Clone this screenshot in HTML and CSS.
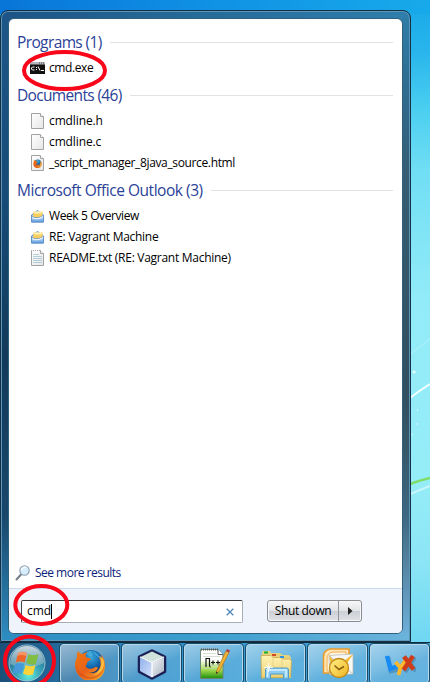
FILE: index.html
```html
<!DOCTYPE html>
<html lang="en">
<head>
<meta charset="utf-8">
<title>Start menu</title>
<link rel="stylesheet" href="styles.css">
</head>
<body>
<svg width="0" height="0" class="defs" aria-hidden="true">
  <defs>
    <linearGradient id="paper" x1="0" y1="0" x2="1" y2="1"><stop offset="0" stop-color="#fff"/><stop offset="1" stop-color="#e6e6e6"/></linearGradient>
    <radialGradient id="globe" cx=".5" cy=".3" r=".7"><stop offset="0" stop-color="#38a9dc"/><stop offset=".6" stop-color="#1160a8"/><stop offset="1" stop-color="#0a2a68"/></radialGradient>
    <linearGradient id="fox" x1="0" y1="0" x2="1" y2="1"><stop offset="0" stop-color="#f07a10"/><stop offset=".5" stop-color="#e8601a"/><stop offset="1" stop-color="#f9b52c"/></linearGradient>
    <linearGradient id="folder" x1="0" y1="0" x2="0" y2="1"><stop offset="0" stop-color="#fff3b4"/><stop offset="1" stop-color="#ecd071"/></linearGradient>
    <linearGradient id="green" x1="0" y1="0" x2="0" y2="1"><stop offset=".35" stop-color="#fff"/><stop offset=".7" stop-color="#a4dc50"/><stop offset="1" stop-color="#1d8e0c"/></linearGradient>
    <linearGradient id="mail" x1="0" y1="0" x2="0" y2="1"><stop offset="0" stop-color="#e4f1ff"/><stop offset="1" stop-color="#5a9be0"/></linearGradient>
    <radialGradient id="orb" cx=".55" cy=".85" r=".8"><stop offset="0" stop-color="#62ecdc"/><stop offset=".45" stop-color="#35a0b6"/><stop offset="1" stop-color="#205d85"/></radialGradient>
    <linearGradient id="shine" x1="0" y1="0" x2="0" y2="1"><stop offset="0" stop-color="#dfe9ec" stop-opacity=".9"/><stop offset="1" stop-color="#b5cdd3" stop-opacity=".35"/></linearGradient>
    <linearGradient id="cubeL" x1="0" y1="0" x2="1" y2="1"><stop offset="0" stop-color="#8fb0ea"/><stop offset="1" stop-color="#d6e2fa"/></linearGradient>
    <linearGradient id="cubeR" x1="0" y1="0" x2="1" y2="1"><stop offset="0" stop-color="#f4f6fa"/><stop offset="1" stop-color="#a8b2bf"/></linearGradient>
    <linearGradient id="gold" x1="0" y1="0" x2="1" y2="1"><stop offset="0" stop-color="#fff08c"/><stop offset="1" stop-color="#f2b51c"/></linearGradient>
    <symbol id="file" viewBox="0 0 16 16"><path d="M2.500.5h8.500l3.500 3v12h-12z" fill="url(#paper)" stroke="#a2a2a2"/><path d="M11.500.5v3h3" fill="#fff" stroke="#a2a2a2"/></symbol>
    <symbol id="envelope" viewBox="0 0 16 16"><path d="M2.500 7 8.500 2.500l6 4.500v7h-12z" fill="#9cc4ee" stroke="#5d8dc6"/><path d="M4.500 3.500h9v6L9 11 4 9z" fill="#f8cf5c"/><path d="M5.500 3.500h7v2H5z" fill="#fff3bd"/><path d="M2.500 8.500q6 3 12-1v6.500h-12z" fill="url(#mail)" stroke="#5d8dc6" stroke-width=".8"/><path d="M3 9.500q5 3 11-1" stroke="#fff" stroke-width="1" fill="none"/></symbol>
    <symbol id="firefox" viewBox="0 0 32 32"><circle cx="17" cy="14.500" r="12.500" fill="url(#globe)"/><path d="M18 3c4 1 7 4 8 7-3-1-5-4-8-7zM12 5c2-2 4-2 6-2-1 2 2 3 0 5-2 1-4 0-6-3z" fill="#4bb5df" opacity=".7"/><path d="M4 3c1 2 3 3 5 3 1-1 3-2 5-2-2 1-3 3-2 5 1 1 4 1 5 1.500 0 2-3 2.500-4 4 0 2 0 2-1.500 3 1 4 6 4 9 2 2-1 4 0 3 1.500-2 3-6 4-9 3 5 3 11 0 12-7 .3-3-.5-6-2-8 2 .5 3 2 3.500 3 0-3-1-5-2-6 4 3 5 7 5 12 0 9-6 15-15 15S1 25 1 17c0-3 1-6 2-8-.3-2 0-4 1-6z" fill="url(#fox)"/><path d="M2 15c1 8 5 13 14 14 8 0 12-4 14-11-1 9-7 13-14 13S1 25 2 15z" fill="#c63a16" opacity=".4"/><path d="M25 8c4 5 3 15-5 19 6-1 10-6 10-12 0-4-2-6-5-7z" fill="#ffd34a" opacity=".75"/></symbol>
  </defs>
</svg>

<div class="desktop">
  <svg class="wallpaper" viewBox="0 0 430 682" aria-hidden="true">
    <path d="M410 354 430 339" stroke="#b5f2fb" stroke-width="1"/>
    <path d="M410 398Q420 390 430 384" stroke="#f1feff" stroke-width="2" fill="none"/>
    <path d="M410 484Q421 480 430 478" stroke="#80dc68" stroke-width="2.500" fill="none"/>
    <path d="M410 494 430 486" stroke="#c9f6fb" stroke-width="2"/>
    <g fill="#e8fdff"><circle cx="414" cy="372" r="1.500"/><circle cx="417.500" cy="410" r=".7"/><circle cx="417" cy="424" r=".7"/><circle cx="412" cy="434.500" r=".7"/></g>
  </svg>

  <main class="menu">
    <div class="panel">
      <section class="results">
        <h2 class="h-programs"><span>Programs (1)</span></h2>
        <ul>
          <li><svg class="icon" viewBox="0 0 16 16"><path d="M1 2h15v12H1z" fill="#111"/><path d="M1 2h15v2.500H1z" fill="#b4b7bd"/><path d="M10 3h1m1 0h1m1 0h1" stroke="#444"/><path d="M5.500 7h-2l-1 1v1l1 1h2M7.500 7v1m0 1v1M9 6.500l2 4M12 10.500h3" stroke="#fff" fill="none"/></svg><span class="t-cmd">cmd.exe</span></li>
        </ul>
        <h2 class="h-documents"><span>Documents (46)</span></h2>
        <ul>
          <li><svg class="icon"><use href="#file"/></svg><span class="t-h">cmdline.h</span></li>
          <li><svg class="icon"><use href="#file"/></svg><span class="t-c">cmdline.c</span></li>
          <li><svg class="icon" viewBox="0 0 16 16"><use href="#file" width="16" height="16"/><use href="#firefox" x="4" y="4" width="9" height="9"/></svg><span class="t-script">_script_manager_8java_source.html</span></li>
        </ul>
        <h2 class="h-outlook"><span>Microsoft Office Outlook (3)</span></h2>
        <ul>
          <li><svg class="icon"><use href="#envelope"/></svg><span class="t-week">Week 5 Overview</span></li>
          <li><svg class="icon"><use href="#envelope"/></svg><span class="t-re">RE: Vagrant Machine</span></li>
          <li><svg class="icon" viewBox="0 0 16 16"><use href="#file" width="16" height="16"/><path d="M4 4.500h6M4 6.500h9M4 8.500h9M4 10.500h9M4 12.500h9" stroke="#b4cdd9"/><path d="M3 .5h8" stroke="#fff" stroke-dasharray="1 1"/></svg><span class="t-readme">README.txt (RE: Vagrant Machine)</span></li>
        </ul>
        <a class="more"><svg class="icon" viewBox="0 0 16 16"><path d="m1.500 14.500 4.500-5" stroke="#777f88" stroke-width="2" stroke-linecap="round"/><circle cx="9.500" cy="5.500" r="4.700" fill="#d6edfb" stroke="#8d9db0" stroke-width="1.100"/><path d="M6.500 5a3.500 3.500 0 0 1 5-2.500" stroke="#fff" stroke-width="1.300" fill="none"/></svg><span class="t-more">See more results</span></a>
      </section>
      <footer class="foot">
        <div class="search"><span class="query">cmd</span><i class="caret"></i><svg class="clear" viewBox="0 0 8 8"><path d="m.7.7 6.600 6.600m0-6.600L.7 7.300" stroke="#5288b8" stroke-width="1.300"/></svg></div>
        <div class="shutdown"><span class="shut-label"><span>Shut down</span></span><span class="shut-arrow"><svg viewBox="0 0 5 8"><path d="M0 0v8l4.500-4z" fill="#222"/></svg></span></div>
      </footer>
    </div>
  </main>

  <nav class="taskbar">
    <div class="start"><svg viewBox="0 0 40 40">
      <circle cx="20" cy="20" r="18" fill="url(#orb)" stroke="#9ec5d2" stroke-width="1"/>
      <path d="M3 21C3 10 10 3 20 3s17 7 17 17c-9 5-23 6-34 1z" fill="url(#shine)"/>
      <path d="M11 10q4.500-2.500 9 0l-2.300 9.500q-4.500-2-9 0z" fill="#ee6629"/><path d="M21.500 11q4.500 2.500 10 0l-2.700 10q-4.500 2-9.500-1z" fill="#80bd42"/><path d="M8.200 21q4.500-2 9 0l-2.500 10q-4.500-2.500-9 0z" fill="#459bda"/><path d="M18.700 22q5 2.500 9.800 0L26 31.500q-5 2-10-1z" fill="#fcd43a"/>
      <path d="M11 10q4.500-2.500 9 0l-.8 3q-4.500-2-9 0z" fill="#f8b48c" opacity=".6"/>
    </svg></div>
    <div class="task"><svg class="app" viewBox="0 0 32 32"><use href="#firefox"/></svg></div>
    <div class="task"><svg class="app" viewBox="0 0 32 32"><path d="M16 3 28.500 9v14.500L16 30 3.500 23.500V9z" fill="#1b2055" stroke="#1b2055" stroke-width="3.500" stroke-linejoin="round"/><path d="m16 3.500 11.500 5.500L16 14.500 4.500 9z" fill="#cfe2dc"/><path d="m4 9.500 12 5.500v14.500L4 23z" fill="url(#cubeL)"/><path d="m28 9.500-12 5.500v14.500L28 23z" fill="url(#cubeR)"/><path d="m4 9 12 5.500L28 9M16 14.500V29" fill="none" stroke="#fff" stroke-width="1.200"/></svg></div>
    <div class="task"><svg class="app" viewBox="0 0 32 32"><path d="M2.500 1.500H20l5 5v24H2.500z" fill="url(#green)" stroke="#6b8575"/><path d="M20 1.500v5h5" fill="#fff" stroke="#555"/><path d="M3 1.500h18" stroke="#555" stroke-width="2" stroke-dasharray="1 1"/><path d="M5 5.500h13M5 8.500h17M5 17.500h17M5 20.500h14" stroke="#b9c9b9" stroke-width=".6"/><path d="M8 19v-8.500h3.500v7q0 1.500 1.200 1.500M13 14.500h4m-2-2v4M18 14.500h4m-2-2v4" fill="none" stroke="#111" stroke-width="1.200"/><path d="m18 26 1-4L28 3l3 1.500L21.500 23z" fill="#f1b434" stroke="#a87420" stroke-width=".7"/><path d="m28 3 1-2 3 1.500-1 2z" fill="#b33a44"/><path d="m18 26 .5-2.500 1.500 1z" fill="#222"/></svg></div>
    <div class="task"><svg class="app" viewBox="0 0 32 32"><path d="M2 7V4l1-1h7l1 2h9l2 2h7l2 3v20H2z" fill="#e9d27c"/><path d="M4 3.500h4v2H4z" fill="#16b030"/><path d="M12 6h4v2h-4z" fill="#d54a2b"/><path d="M1 7.500h10l2 2h8l1.500 1.500H30l1.500 2-1 16-29 1z" fill="url(#folder)" stroke="#caab4e" stroke-width=".8"/><path d="M20 8h4v2h-4z" fill="#2e95e0"/><path d="M13 10v18M22 11v17" stroke="#e6cf80" stroke-width=".8"/><path d="M5.500 31v-9q0-2 2-2h19q2 0 2 2v9h-5v-5h-13v5z" fill="#8ccaf0" stroke="#4f9cc9"/><path d="M7 22h20M7.500 23v6m18.500-6v6" stroke="#d6f2ff" stroke-width="1.500"/><path d="M8.500 15v9M4 19.500h9M6 17l5 5m0-5-5 5" stroke="#fff" stroke-width=".8"/></svg></div>
    <div class="task"><svg class="app" viewBox="0 0 32 32"><path d="M1.500 25V9q0-7 7-8h18.500v24z" fill="#fde5b4" stroke="#ee9a27" stroke-width="1.500"/><path d="M5 23V11q0-6 6-7h13v19z" fill="#fff4dc" stroke="#f1ac50"/><path d="M7 7.500 31 6v20l-23 1z" fill="#f7f7f5" stroke="#b6b6b0" stroke-width=".7"/><path d="m8 8 11 10L31 7M8 27l8-9m15 8-9-8" fill="none" stroke="#bbb" stroke-width=".8"/><path d="m7 7.500 6 6.500 9-1 9-7-7 11H9z" fill="#f3bb32"/><circle cx="17" cy="20" r="9.500" fill="url(#gold)" stroke="#c18a17" stroke-width="1.300"/><path d="m12.500 17.500 4.500 4 5-3" fill="none" stroke="#866012" stroke-width="1.500"/></svg></div>
    <div class="task"><svg class="app" viewBox="0 0 32 32"><g fill="none" stroke="#234f72" stroke-opacity=".3" stroke-width="4.500" transform="translate(1 1)"><path d="m3 8 3 14 8-2M20 9l11 13M30 8 20 23"/></g><path d="m3 8 3.500 13 7-3" fill="none" stroke="#178bf3" stroke-width="4.500"/><path d="m11.500 14 5 6 5-8m-5 8-2 7" fill="none" stroke="#fdb82c" stroke-width="3.800"/><path d="m20 8.500 9.500 13M29 8 19.500 22" fill="none" stroke="#ce3c19" stroke-width="4.500"/></svg></div>
  </nav>

  <svg class="marks" viewBox="0 0 430 682" aria-hidden="true"><g fill="none" stroke="#f80619" stroke-width="4"><ellipse cx="64.500" cy="70.500" rx="40.500" ry="18.500"/><ellipse cx="41.300" cy="605" rx="26" ry="19"/><ellipse cx="29.500" cy="661" rx="24.500" ry="24.500"/></g></svg>
</div>
</body>
</html>
```
FILE: styles.css
```css
* { box-sizing: border-box; }
body { margin: 0; font: 12px/16px "Open Sans", "Noto Sans", sans-serif; color: #000; }
.defs, .wallpaper, .marks { position: absolute; top: 0; left: 0; }
.desktop {
  position: relative;
  width: 430px;
  height: 682px;
  overflow: hidden;
  display: flex;
  flex-direction: column;
  padding-top: 10px;
  background:
    linear-gradient(90deg, #0875d8, #0f8fe4 45%, #17aaea) 0 0 / 430px 14px no-repeat,
    linear-gradient(#18a8e8 0, #28b5ec 50px, #4bcff0 110px, #70def4 170px, #92ebf8 300px, #95edf8 480px, #8ce5f5 560px, #6fd7f2 642px);
}
.wallpaper, .marks { width: 430px; height: 682px; pointer-events: none; }
.menu {
  position: relative;
  width: 411px;
  height: 632px;
  padding: 7px;
  border: 1px solid #142f46;
  border-radius: 8px 8px 0 0;
  box-shadow: inset 0 0 0 1px #5c97b7;
  background:
    linear-gradient(90deg, #1d5387, #246695 35%, #2e7eac) 0 0 / 100% 8px no-repeat,
    linear-gradient(90deg, #2c8cc0, #3c9fd0 50%, #6ab3dc) 0 100% / 100% 8px no-repeat,
    linear-gradient(#1d5788, #174b78 30%, #123a5a 55%, #19476b 80%, #2e8dc2) 0 0 / 50% 100% no-repeat,
    linear-gradient(#2e7da9, #2e6d91 12%, #365d73 26%, #314f5e 60%, #355766 68%, #3e6881 80%, #55819e 87%, #70b4df) 100% 0 / 50% 100% no-repeat;
}
.panel {
  height: 616px;
  display: flex;
  flex-direction: column;
  overflow: hidden;
  border: 1px solid #315f7e;
  border-radius: 6px;
  background: #fff;
}
.results { flex: 1; display: flex; flex-direction: column; padding: 7px 9px 4px 8px; }
h2 {
  height: 31px;
  margin: 0 0 1px;
  display: flex;
  align-items: center;
  gap: 8px;
  font-size: 15.5px;
  line-height: 20px;
  font-weight: 400;
  color: #2b4298;
  white-space: nowrap;
}
h2::after { content: ""; flex: 1; height: 1px; margin-top: 2px; background: #e2e2e4; }
.h-programs { letter-spacing: -.62px; }
.h-documents { letter-spacing: -.66px; }
.h-outlook { letter-spacing: -.47px; }
ul { margin: 0; padding: 0 0 0 12px; list-style: none; }
li { height: 21px; display: flex; align-items: center; gap: 4px; white-space: nowrap; }
li .icon { margin-top: -1px; }
li span { margin-top: -1px; }
.t-cmd { letter-spacing: -.4px; }
.t-h, .t-c { letter-spacing: -.12px; }
.t-script { letter-spacing: -.36px; }
.t-week { letter-spacing: -.4px; }
.t-re { letter-spacing: -.28px; }
.t-readme { letter-spacing: -.28px; }
.t-more { letter-spacing: -.52px; }
.icon { width: 16px; height: 16px; flex: none; }
.more { margin: auto 0 0 -2px; height: 22px; display: flex; align-items: center; gap: 4px; color: #0a1c78; white-space: nowrap; }
.foot {
  height: 45px;
  display: flex;
  align-items: flex-start;
  justify-content: space-between;
  padding: 11px 40px 0 12px;
  border-top: 1px solid #c9d8ea;
  background: #eff3fb;
}
.search {
  width: 222px;
  height: 23px;
  display: flex;
  align-items: center;
  padding: 0 8px 0 5px;
  border: 1px solid #a9adb5;
  border-top-color: #343434;
  border-left-color: #444;
  border-radius: 2px;
  background: #fff;
}
.query { margin-top: -1px; }
.caret { width: 1px; height: 15px; background: #000; }
.clear { width: 8px; height: 8px; margin-left: auto; }
.shutdown {
  width: 95px;
  height: 22px;
  display: flex;
  border: 1px solid #898b91;
  border-radius: 3px;
  background: linear-gradient(#f7f7f8, #e3e4e7 48%, #cccfd5 52%, #dfe1e6);
  box-shadow: inset 0 0 0 1px #f7f8fa;
}
.shut-label { width: 71px; display: flex; align-items: center; justify-content: center; border-right: 1px solid #92949a; letter-spacing: -.36px; }
.shut-arrow { flex: 1; display: flex; align-items: center; justify-content: center; }
.shut-arrow svg { width: 5px; height: 8px; }
.taskbar {
  position: relative;
  height: 40px;
  display: flex;
  align-items: flex-start;
  gap: 3px;
  padding-top: 1px;
  border-top: 1px solid #112b3e;
  background: linear-gradient(90deg, #1b5079, #23699b 13%, #2a8bc6 34%, #3a9fd6 60%, #48a3d8);
}
.start { width: 57px; height: 38px; padding-left: 7px; flex: none; }
.start svg { width: 40px; height: 40px; display: block; margin-top: -1px; }
.task {
  width: 59px;
  height: 39px;
  flex: none;
  display: flex;
  align-items: center;
  justify-content: center;
  border: 1px solid #b5d8ea;
  outline: 1px solid #184a6a;
  border-radius: 3px;
  background: linear-gradient(155deg, rgba(255,255,255,.52), rgba(255,255,255,.3) 42%, rgba(255,255,255,.18) 60%, rgba(190,230,250,.22));
}
.app { width: 32px; height: 32px; }
```
